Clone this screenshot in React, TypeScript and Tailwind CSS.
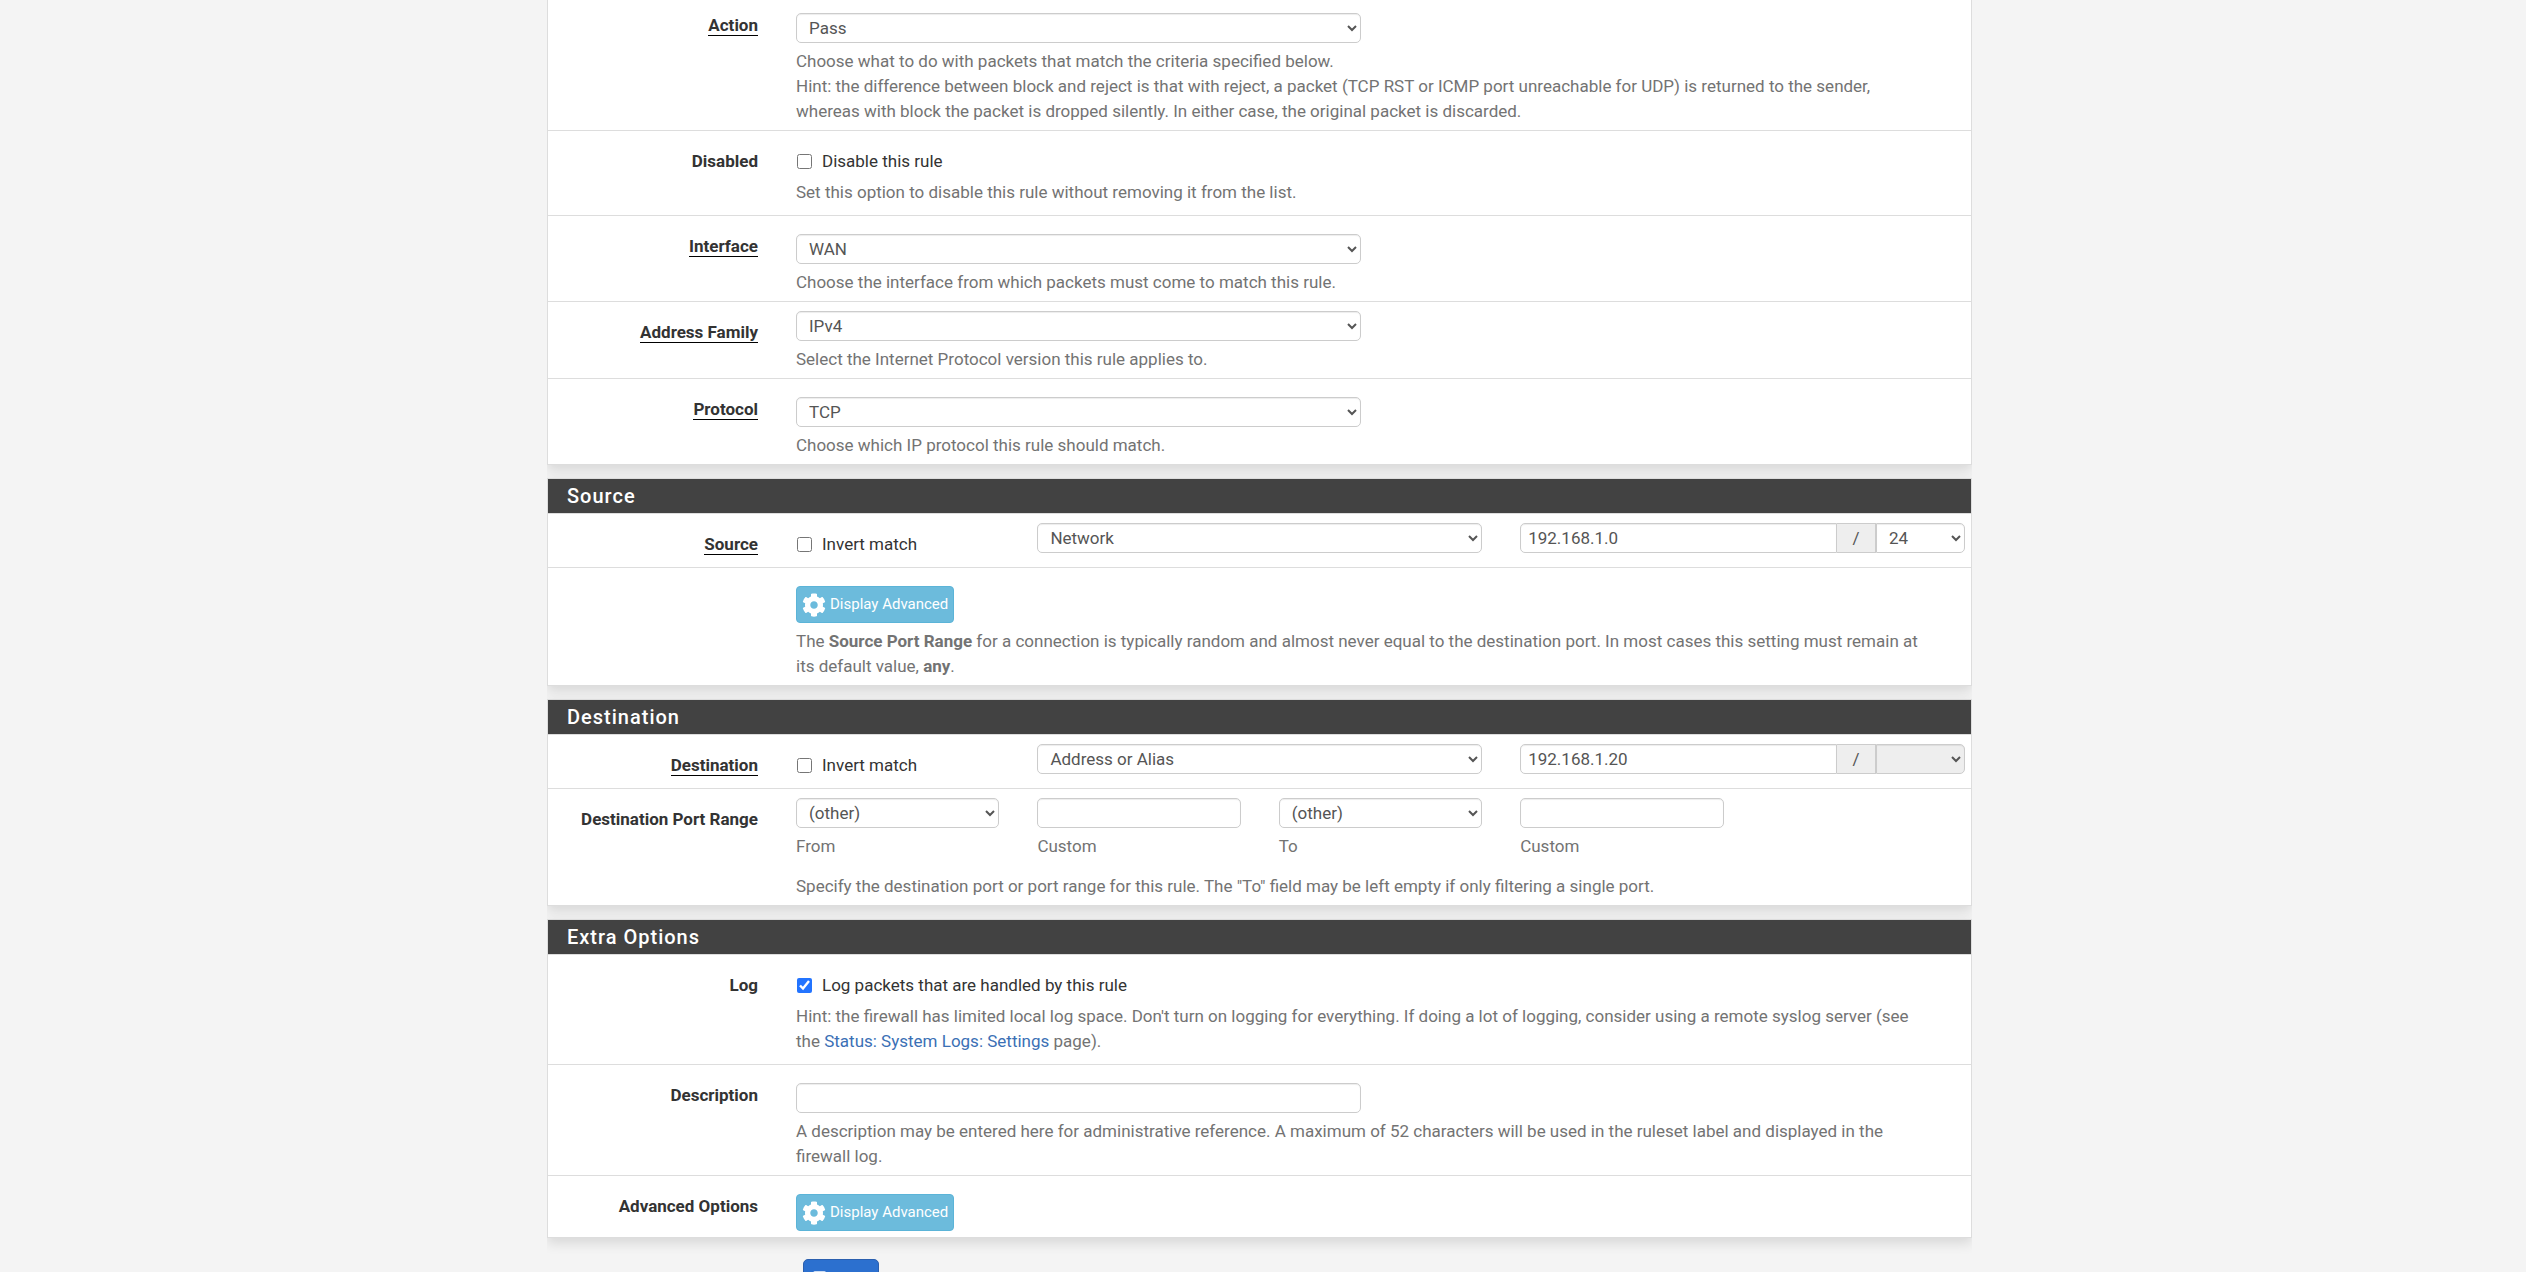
import React, { useState } from 'react';
import { FaCog, FaSave } from 'react-icons/fa';

const inputStyle =
  'h-[30px] border border-[#ccc] bg-white text-[#555] shadow-[inset_0_1px_1px_rgba(0,0,0,0.075)] outline-none';

type SelectProps = {
  id?: string;
  label?: string;
  options: string[];
  disabled?: boolean;
  className?: string;
};

function Select({ id, label, options, disabled, className = 'w-full rounded-[5px]' }: SelectProps) {
  return (
    <select
      id={id}
      aria-label={label}
      disabled={disabled}
      className={`${inputStyle} px-2 disabled:bg-[#eee] disabled:opacity-100 ${className}`}
    >
      {options.map((option) => (
        <option key={option}>{option}</option>
      ))}
    </select>
  );
}

function Panel({ title, children }: { title?: string; children: React.ReactNode }) {
  return (
    <section className="mb-[13px] border border-[#ddd] bg-white shadow-[0_5px_12px_rgba(0,0,0,0.12)]">
      {title && (
        <h2 className="border-b border-[#ddd] bg-[#424242] bg-clip-padding px-[19px] text-xl leading-[34px] font-medium tracking-wider text-white">
          {title}
        </h2>
      )}
      <div className="divide-y divide-[#ddd]">{children}</div>
    </section>
  );
}

type RowProps = {
  label?: string;
  htmlFor?: string;
  required?: boolean;
  className?: string;
  children: React.ReactNode;
};

function Row({ label, htmlFor, required, className = 'pt-[18px] pb-[6px]', children }: RowProps) {
  return (
    <div className="flex">
      <div className="w-[210px] shrink-0 pt-[18px] text-right leading-[25px] font-bold text-[#333]">
        {label && (
          <label htmlFor={htmlFor} className={required ? 'border-b border-black' : ''}>
            {label}
          </label>
        )}
      </div>
      <div className={`min-w-0 grow pr-[6px] pl-[38px] ${className}`}>{children}</div>
    </div>
  );
}

function Help({ children }: { children: React.ReactNode }) {
  return <p className="mt-[6px] max-w-[1130px] leading-[25px] text-[#737373]">{children}</p>;
}

type CheckProps = { id: string; label: string; checked?: boolean };

function Check({ id, label, checked = false }: CheckProps) {
  const [on, setOn] = useState(checked);
  return (
    <label className="flex items-center gap-[10px] leading-[25px] text-[#333]">
      <input
        id={id}
        type="checkbox"
        checked={on}
        onChange={() => setOn(!on)}
        className="ml-px size-[15px] accent-[#2374ff]"
      />
      {label}
    </label>
  );
}

function AdvancedButton() {
  return (
    <button
      type="button"
      className="flex h-[37px] items-center gap-1 rounded-[4px] border border-[#5bb4d8] bg-[#6cbbdc] px-[5px] text-[15px] text-white"
    >
      <FaCog className="size-6" />
      Display Advanced
    </button>
  );
}

type AddressProps = { label: string; value: string; bits: string; disabled?: boolean };

function Address({ label, value, bits, disabled }: AddressProps) {
  return (
    <div className="col-span-2 flex">
      <input
        type="text"
        aria-label={`${label} address`}
        defaultValue={value}
        className={`${inputStyle} min-w-0 grow rounded-l-[5px] px-[7px]`}
      />
      <span className="h-[30px] w-[39px] border-y border-r border-[#ccc] bg-[#eee] text-center leading-7 text-[#555]">
        /
      </span>
      <Select
        label={`${label} mask`}
        options={[bits]}
        disabled={disabled}
        className="w-[89px] rounded-r-[5px]"
      />
    </div>
  );
}

function PortField({ caption, children }: { caption: string; children: React.ReactNode }) {
  return (
    <label className="block text-[#737373]">
      {children}
      <span className="mt-[6px] block leading-[25px]">{caption}</span>
    </label>
  );
}

function App() {
  return (
    <form
      onSubmit={(e) => e.preventDefault()}
      className="h-screen overflow-hidden bg-[#f4f4f4] pr-[7px] font-[Roboto,sans-serif] text-[17px]"
    >
      <div className="mx-auto -mt-[6px] w-full max-w-[1425px] overflow-x-clip">
        <Panel>
          <Row label="Action" htmlFor="action" required>
            <Select id="action" options={['Pass', 'Block', 'Reject']} className="w-[565px] max-w-full rounded-[5px]" />
            <Help>
              Choose what to do with packets that match the criteria specified below.
              <br />
              Hint: the difference between block and reject is that with reject, a packet (TCP RST or ICMP port
              unreachable for UDP) is returned to the sender, whereas with block the packet is dropped silently. In
              either case, the original packet is discarded.
            </Help>
          </Row>
          <Row label="Disabled" htmlFor="disabled" className="pt-[18px] pb-[10px]">
            <Check id="disabled" label="Disable this rule" />
            <Help>Set this option to disable this rule without removing it from the list.</Help>
          </Row>
          <Row label="Interface" htmlFor="interface" required>
            <Select id="interface" options={['WAN', 'LAN']} className="w-[565px] max-w-full rounded-[5px]" />
            <Help>Choose the interface from which packets must come to match this rule.</Help>
          </Row>
          <Row label="Address Family" htmlFor="family" required className="pt-[9px] pb-[6px]">
            <Select id="family" options={['IPv4', 'IPv6', 'IPv4+IPv6']} className="w-[565px] max-w-full rounded-[5px]" />
            <Help>Select the Internet Protocol version this rule applies to.</Help>
          </Row>
          <Row label="Protocol" htmlFor="protocol" required>
            <Select id="protocol" options={['TCP', 'UDP', 'ICMP']} className="w-[565px] max-w-full rounded-[5px]" />
            <Help>Choose which IP protocol this rule should match.</Help>
          </Row>
        </Panel>

        <Panel title="Source">
          <Row label="Source" htmlFor="srcnot" required className="pt-[9px] pb-[10px]">
            <div className="grid grid-cols-5 gap-x-[38px]">
              <div className="pt-[9px]">
                <Check id="srcnot" label="Invert match" />
              </div>
              <div className="col-span-2">
                <Select label="Source type" options={['Network', 'any', 'Address or Alias']} />
              </div>
              <Address label="Source" value="192.168.1.0" bits="24" />
            </div>
          </Row>
          <Row>
            <AdvancedButton />
            <Help>
              The <b>Source Port Range</b> for a connection is typically random and almost never equal to the
              destination port. In most cases this setting must remain at its default value, <b>any</b>.
            </Help>
          </Row>
        </Panel>

        <Panel title="Destination">
          <Row label="Destination" htmlFor="dstnot" required className="pt-[9px] pb-[10px]">
            <div className="grid grid-cols-5 gap-x-[38px]">
              <div className="pt-[9px]">
                <Check id="dstnot" label="Invert match" />
              </div>
              <div className="col-span-2">
                <Select label="Destination type" options={['Address or Alias', 'any', 'Network']} />
              </div>
              <Address label="Destination" value="192.168.1.20" bits="" disabled />
            </div>
          </Row>
          <Row label="Destination Port Range" htmlFor="dstbegin" className="pt-[9px] pb-[6px]">
            <div className="grid grid-cols-5 gap-x-[38px]">
              <PortField caption="From">
                <Select id="dstbegin" options={['(other)', 'any']} />
              </PortField>
              <PortField caption="Custom">
                <input type="text" className={`${inputStyle} w-full rounded-[5px] px-[7px]`} />
              </PortField>
              <PortField caption="To">
                <Select options={['(other)', 'any']} />
              </PortField>
              <PortField caption="Custom">
                <input type="text" className={`${inputStyle} w-full rounded-[5px] px-[7px]`} />
              </PortField>
            </div>
            <p className="mt-[15px] leading-[25px] text-[#737373]">
              Specify the destination port or port range for this rule. The "To" field may be left empty if only
              filtering a single port.
            </p>
          </Row>
        </Panel>

        <Panel title="Extra Options">
          <Row label="Log" htmlFor="log" className="pt-[18px] pb-[10px]">
            <Check id="log" label="Log packets that are handled by this rule" checked />
            <Help>
              Hint: the firewall has limited local log space. Don't turn on logging for everything. If doing a lot of
              logging, consider using a remote syslog server (see the{' '}
              <a href="#settings" className="text-[#3b70b5]">
                Status: System Logs: Settings
              </a>{' '}
              page).
            </Help>
          </Row>
          <Row label="Description" htmlFor="descr">
            <input
              id="descr"
              type="text"
              className={`${inputStyle} block w-[565px] max-w-full rounded-[5px] px-[7px]`}
            />
            <Help>
              A description may be entered here for administrative reference. A maximum of 52 characters will be used
              in the ruleset label and displayed in the firewall log.
            </Help>
          </Row>
          <Row label="Advanced Options">
            <AdvancedButton />
          </Row>
        </Panel>

        <button
          type="submit"
          className="mt-[21px] ml-64 flex h-10 items-center gap-1 rounded-[5px] border border-[#2b5fae] bg-[#2c70cf] px-2 text-white"
        >
          <FaSave className="size-[18px]" />
          Save
        </button>
      </div>
    </form>
  );
}

export default App;
